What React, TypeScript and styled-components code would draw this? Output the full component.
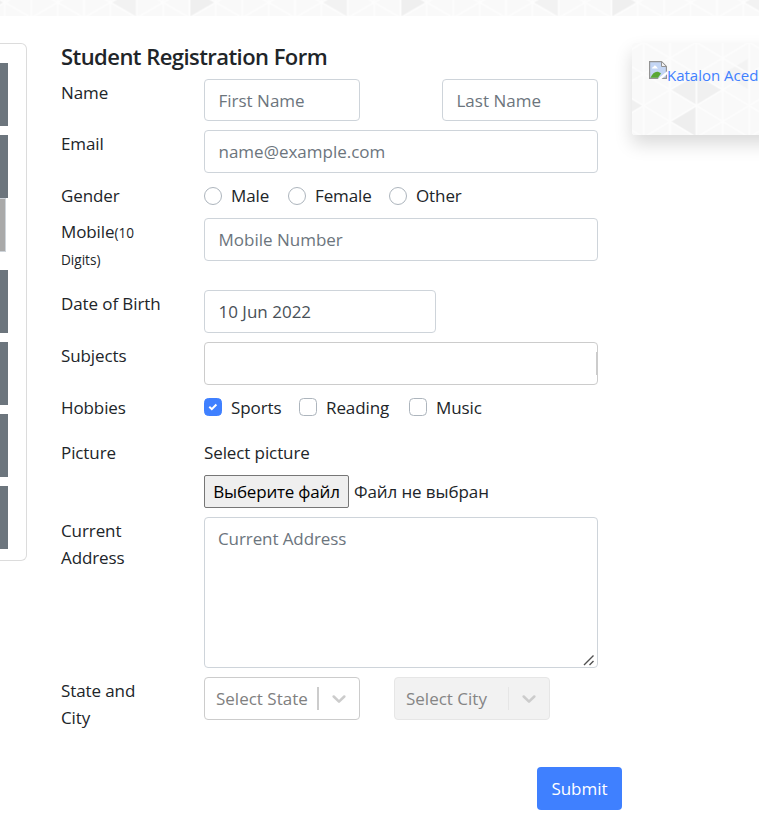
import React from "react";
import styled, { createGlobalStyle } from "styled-components";

const Global = createGlobalStyle`
  * { box-sizing: border-box; }
  html, body { margin: 0; background: #fff; }
  body {
    width: 759px; height: 818px; overflow: hidden;
    font-family: "Open Sans", "Noto Sans", sans-serif;
    font-size: 17px; line-height: 27px; color: #212529; letter-spacing: -0.1px;
  }
  input, textarea, button { font: inherit; letter-spacing: inherit; }
`;

const Page = styled.div`height: 818px; overflow: hidden; position: relative;`;
const Banner = styled.header`height: 16px; overflow: hidden; svg { display: block; }`;
const Columns = styled.div`display: grid; grid-template-columns: 27px 595px 200px; padding-top: 27px; align-items: start;`;

const Sidebar = styled.nav`
  height: 518px; border: 1px solid #dcdcdc; border-left: 0; border-radius: 0 6px 6px 0;
  padding-top: 19px; display: flex; flex-direction: column;
`;
const Group = styled.div<{ $gap: number }>`
  flex: none; width: 8px; height: 63px; background: #6c757d; margin-bottom: ${p => p.$gap}px;
`;
const SubItem = styled.div`
  flex: none; width: 6px; height: 54px; background: #a9a9a9; border: 1px solid #ced4da; border-left: 0; margin-bottom: 18px;
`;

const Form = styled.form`margin-left: 34px; width: 561px;`;
const Title = styled.h5`margin: 0; height: 36px; font-size: 22px; font-weight: 600; line-height: 27px; letter-spacing: -0.55px; white-space: nowrap;`;
const Row = styled.div<{ $h: number }>`display: grid; grid-template-columns: 143px 394px; height: ${p => p.$h}px; align-items: start;`;
const Label = styled.label`width: 104px; small { font-size: 13.6px; line-height: 1; letter-spacing: 0; }`;
const Field = styled.input<{ $w?: number; $h?: number }>`
  display: block; width: ${p => p.$w ?? 394}px; height: ${p => p.$h ?? 43}px;
  border: 1px solid #ced4da; border-radius: 4px; padding: 0 13.5px;
  color: #495057; background: #fff; outline: none; letter-spacing: 0;
  &::placeholder { color: #6c757d; opacity: 1; }
`;
const Split = styled.div`display: flex; justify-content: space-between;`;
const AreaWrap = styled.div`position: relative; width: 394px; height: 151px;`;
const Area = styled.textarea`
  display: block; width: 394px; height: 151px; border: 1px solid #ced4da; border-radius: 4px; padding: 7px 13px;
  resize: none; line-height: 27px; outline: none;
  &::placeholder { color: #6c757d; opacity: 1; }
`;
const Grip = styled.svg`position: absolute; right: 3px; bottom: 2px; pointer-events: none;`;
const SubjectBox = styled.div`
  width: 394px; height: 43px; border: 1px solid #ccc; border-radius: 4px;
  display: flex; justify-content: flex-end; align-items: center;
  i { width: 1px; height: 23px; background: #ccc; }
`;
const Options = styled.div`display: flex; height: 27px; align-items: center;`;
const Option = styled.label<{ $w: number }>`display: flex; align-items: center; width: ${p => p.$w}px; gap: 9px; white-space: nowrap;`;
const Mark = styled.span<{ $round?: boolean; $on?: boolean }>`
  flex: none; width: 18px; height: 18px; border: 1px solid ${p => (p.$on ? "#3f80ff" : "#adb5bd")};
  border-radius: ${p => (p.$round ? "50%" : "4.5px")}; background: ${p => (p.$on ? "#3f80ff" : "#fff")};
  display: grid; place-items: center; margin-top: ${p => (p.$round ? 1 : -1)}px;
`;
const FileLine = styled.div`display: flex; align-items: center; gap: 5px; margin-top: 9px; white-space: nowrap;`;
const FileButton = styled.button`
  width: 145px; height: 33px; padding: 0; border: 1px solid #767676; border-radius: 2px; background: #efefef; color: #000;
  letter-spacing: -0.2px;
`;
const Selects = styled.div`display: flex; gap: 34px;`;
const SelectBox = styled.div<{ $off?: boolean }>`
  width: 156px; height: 43px; border-radius: 4px; border: 1px solid ${p => (p.$off ? "#e6e6e6" : "#ccc")};
  background: ${p => (p.$off ? "#f2f2f2" : "#fff")}; color: ${p => (p.$off ? "#858585" : "#808080")};
  display: grid; grid-template-columns: ${p => (p.$off ? 102 : 101)}px 1fr; align-items: center; padding-left: 11px; white-space: nowrap;
  letter-spacing: 0;
`;
const Arrow = styled.span<{ $off?: boolean }>`
  height: 23px; display: grid; place-items: center; border-left: ${p => (p.$off ? "1px solid #e6e6e6" : "2px solid #ccc")};
  padding-top: 1px;
`;
const Submit = styled.button`
  display: block; margin-left: auto; width: 85px; height: 43px; border: 0; border-radius: 4px; background: #3f80ff; color: #fff; padding: 0;
  letter-spacing: 0;
`;

const Ad = styled.aside`
  margin-left: 10px; width: 200px; height: 92px; border-radius: 3px; box-shadow: 0 9px 18px rgba(0,0,0,.15);
  display: grid; overflow: hidden;
  > * { grid-area: 1 / 1; }
`;
const AdLink = styled.a`
  display: flex; align-items: flex-start; margin: 18px 0 0 17px; color: #3f80ff; font-size: 15px; line-height: 29px; white-space: nowrap; z-index: 1; letter-spacing: 0;
`;

const COL = 26.37;

type Facet = [column: number, row: number, left: boolean, fill: string];

function Mosaic({ id, w, h, x, y, side, dark }: { id: string; w: number; h: number; x: number; y: number; side: number; dark: Facet[] }) {
  const cols = Array.from({ length: 9 }, (_, i) => i);
  return (
    <svg width={w} height={h}>
      <defs>
        <pattern id={id} width={COL * 8} height={side * 4} patternUnits="userSpaceOnUse" patternTransform={`translate(${x} ${y})`}>
          <rect width={COL * 8} height={side * 4} fill="#f9f9f9" />
          {dark.map(([c, r, left, fill], i) => {
            const base = left ? (c + 1) * COL : c * COL;
            const tip = left ? c * COL : (c + 1) * COL;
            return [0, -4, 4].map(k => {
              const m = (r + k) * side;
              return <path key={`${i}${k}`} d={`M${tip} ${m}L${base} ${m - side / 2}V${m + side / 2}Z`} fill={fill} />;
            });
          })}
          {cols.map(c => <path key={c} d={`M${c * COL} 0V${side * 4}`} stroke="#fdfdfd" strokeWidth="1.8" />)}
          {[-4, -3, -2, -1, 0, 1, 2, 3, 4, 5, 6, 7, 8].map(r => (
            <path key={r} d={`M0 ${r * side}L${COL * 8} ${(r + 4) * side}M0 ${r * side}L${COL * 8} ${(r - 4) * side}`} stroke="#fdfdfd" strokeWidth="1.8" />
          ))}
        </pattern>
      </defs>
      <rect width={w} height={h} fill={`url(#${id})`} />
    </svg>
  );
}

const Chevron = () => (
  <svg width="14" height="9" viewBox="0 0 14 9"><path d="M1.7 1.5L7 6.7L12.3 1.5" fill="none" stroke="#ccc" strokeWidth="2.5" strokeLinecap="round" strokeLinejoin="round" /></svg>
);

const BrokenImage = () => (
  <svg width="18" height="18" viewBox="0 0 18 18">
    <path d="M.6.6H12.5L17.4 5.5V17.4H.6Z" fill="#c4d6f5" stroke="#949494" strokeWidth="1.2" />
    <path d="M12.5.6V5.5H17.4Z" fill="#f4f4f4" stroke="#949494" />
    <path d="M3 7.5C3 5.8 5 6 5.2 4.8C6.7 4 7.6 6 9 7.5Z" fill="#fff" />
    <path d="M1.5 16.8C4 11 8 9 12 12.5L9 16.8Z" fill="#5aa735" />
    <path d="M8.7 18L18 10.2V13.2L12.5 18Z" fill="#fff" />
  </svg>
);

export default function App() {
  return (
    <Page>
      <Global />
      <Banner>
        <Mosaic id="top" w={759} h={16} x={-100.5} y={2.5} side={30.5} dark={[[0, 0, true, "#f2f2f2"], [3, 0, false, "#efefef"]]} />
      </Banner>
      <Columns>
        <Sidebar>
          <Group $gap={9} /><Group $gap={0} /><SubItem />
          <Group $gap={9} /><Group $gap={9} /><Group $gap={9} /><Group $gap={0} />
        </Sidebar>
        <Form onSubmit={e => e.preventDefault()}>
          <Title>Student Registration Form</Title>
          <Row $h={51}>
            <Label>Name</Label>
            <Split><Field $w={156} $h={42} placeholder="First Name" /><Field $w={156} $h={42} placeholder="Last Name" /></Split>
          </Row>
          <Row $h={52}><Label>Email</Label><Field placeholder="name@example.com" /></Row>
          <Row $h={36}>
            <Label>Gender</Label>
            <Options>
              <Option $w={84}><Mark $round />Male</Option>
              <Option $w={101}><Mark $round />Female</Option>
              <Option $w={80}><Mark $round />Other</Option>
            </Options>
          </Row>
          <Row $h={72}><Label>Mobile<small>(10 Digits)</small></Label><Field placeholder="Mobile Number" /></Row>
          <Row $h={52}><Label>Date of Birth</Label><Field $w={232} defaultValue="10 Jun 2022" /></Row>
          <Row $h={52}><Label>Subjects</Label><SubjectBox><i /></SubjectBox></Row>
          <Row $h={45}>
            <Label>Hobbies</Label>
            <Options>
              <Option $w={95}>
                <Mark $on><svg width="10" height="8" viewBox="0 0 10 8"><path d="M1.3 3.8L3.8 6.2L8.4 1.5" fill="none" stroke="#fff" strokeWidth="2" /></svg></Mark>Sports
              </Option>
              <Option $w={110}><Mark />Reading</Option>
              <Option $w={80}><Mark />Music</Option>
            </Options>
          </Row>
          <Row $h={78}>
            <Label>Picture</Label>
            <div>Select picture
              <FileLine><FileButton type="button">Выберите файл</FileButton><span>Файл не выбран</span></FileLine>
            </div>
          </Row>
          <Row $h={160}>
            <Label>Current Address</Label>
            <AreaWrap>
              <Area placeholder="Current Address" />
              <Grip width="12" height="12" viewBox="0 0 12 12"><path d="M1 11L10.5 1.5M6.5 11L10.5 7" stroke="#505050" strokeWidth="1.4" /></Grip>
            </AreaWrap>
          </Row>
          <Row $h={90}>
            <Label>State and City</Label>
            <Selects>
              <SelectBox>Select State<Arrow><Chevron /></Arrow></SelectBox>
              <SelectBox $off>Select City<Arrow $off><Chevron /></Arrow></SelectBox>
            </Selects>
          </Row>
          <Submit>Submit</Submit>
        </Form>
        <Ad>
          <Mosaic id="ad" w={200} h={92} x={11.6} y={-0.7} side={31.7} dark={[[1, 1.5, true, "#f0f0f0"], [2, 1.5, false, "#f0f0f0"], [1, 2.5, true, "#eeeeee"], [7, 2, false, "#f0f0f0"], [3, 1, true, "#f3f3f3"]]} />
          <AdLink><BrokenImage />Katalon Acedemy</AdLink>
        </Ad>
      </Columns>
    </Page>
  );
}
